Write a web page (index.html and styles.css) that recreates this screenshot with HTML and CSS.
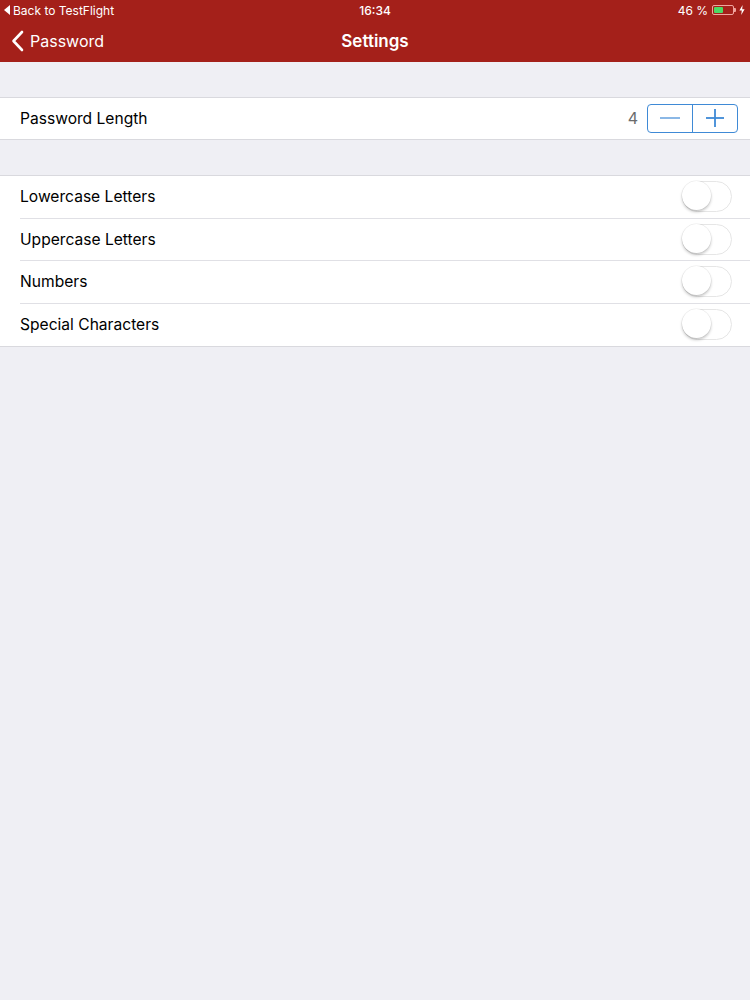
FILE: index.html
```html
<!DOCTYPE html>
<html>
<head>
<meta charset="utf-8">
<link rel="stylesheet" href="styles.css">
</head>
<body>
<div class="app">
  <header class="header">
    <div class="status">
      <div class="status-left"><span class="tri"></span>Back to TestFlight</div>
      <div class="status-center">16:34</div>
      <div class="status-right">
        <span>46 %</span>
        <span class="battery"><span class="battery-fill"></span></span>
        <span class="battery-tip"></span>
        <svg class="bolt" width="6" height="10" viewBox="0 0 6 10"><path d="M3.6 0 L0.4 5.6 H2.8 L2.2 10 L5.6 4.2 H3.2 Z" fill="#fff"/></svg>
      </div>
    </div>
    <div class="nav">
      <div class="nav-back">
        <svg width="13" height="22" viewBox="0 0 13 22"><path d="M11 2 L2.5 11 L11 20" fill="none" stroke="#fff" stroke-width="2.6" stroke-linecap="round" stroke-linejoin="round"/></svg>
        <span>Password</span>
      </div>
      <div class="nav-title">Settings</div>
    </div>
  </header>
  <main class="content">
    <section class="group group-first">
      <div class="row row-last">
        <span class="label">Password Length</span>
        <div class="stepper-wrap">
          <span class="value">4</span>
          <div class="stepper">
            <div class="step"><svg width="20" height="2" viewBox="0 0 20 2"><rect width="20" height="1.2" y="0.4" fill="#3f8ad6"/></svg></div>
            <div class="step step-plus"><svg width="18" height="18" viewBox="0 0 18 18"><rect x="0" y="8.1" width="18" height="1.8" fill="#3f8ad6"/><rect x="8.1" y="0" width="1.8" height="18" fill="#3f8ad6"/></svg></div>
          </div>
        </div>
      </div>
    </section>
    <section class="group">
      <div class="row"><span class="label">Lowercase Letters</span><span class="toggle"><span class="knob"></span></span></div>
      <div class="row"><span class="label">Uppercase Letters</span><span class="toggle"><span class="knob"></span></span></div>
      <div class="row"><span class="label">Numbers</span><span class="toggle"><span class="knob"></span></span></div>
      <div class="row row-last"><span class="label">Special Characters</span><span class="toggle"><span class="knob"></span></span></div>
    </section>
  </main>
</div>
</body>
</html>
```
FILE: styles.css
```css
* { box-sizing: border-box; }
html, body { margin: 0; padding: 0; }
body {
  width: 750px;
  height: 1000px;
  background: #efeff4;
  font-family: Inter, "Noto Sans", sans-serif;
  color: #000;
  overflow: hidden;
}
.header {
  background: #a4201a;
  color: #fff;
  height: 62px;
}
.status {
  height: 20px;
  display: flex;
  align-items: center;
  justify-content: space-between;
  padding: 0 5px 0 4px;
  font-size: 12px;
  position: relative;
}
.status-left { display: flex; align-items: center; gap: 2px; }
.tri {
  width: 0; height: 0;
  border-top: 5px solid transparent;
  border-bottom: 5px solid transparent;
  border-right: 6px solid #fff;
  margin-right: 1px;
}
.status-center {
  position: absolute;
  left: 0; right: 0;
  text-align: center;
  font-weight: 500;
  pointer-events: none;
}
.status-right { display: flex; align-items: center; gap: 0; }
.status-right span:first-child { margin-right: 4px; }
.battery {
  width: 22px; height: 10px;
  border: 1px solid #f0a59f;
  border-radius: 2px;
  padding: 1px;
  display: flex;
}
.battery-fill { width: 9px; height: 100%; background: #4cd964; border-radius: 1px; }
.battery-tip { width: 2px; height: 4px; background: #f0a59f; border-radius: 0 1px 1px 0; margin-right: 3px; }
.nav {
  height: 42px;
  display: flex;
  align-items: center;
  position: relative;
  padding-left: 11px;
}
.nav-back { display: flex; align-items: center; gap: 6px; font-size: 16px; }
.nav-title {
  position: absolute; left: 0; right: 0; text-align: center;
  font-size: 17px; font-weight: 600;
  pointer-events: none;
}
.content { padding-top: 35px; }
.group {
  background: #fff;
  border-top: 1px solid #d9d9de;
  border-bottom: 1px solid #d9d9de;
  margin-bottom: 35px;
}
.row {
  height: 42.5px;
  margin-left: 20px;
  padding-right: 12px;
  display: flex;
  align-items: center;
  justify-content: space-between;
  border-bottom: 1px solid #e0e0e5;
  font-size: 15.6px;
}
.group-first .row { height: 41px; padding-bottom: 1px; }
.row-last { border-bottom: none; }
.stepper-wrap { display: flex; align-items: center; gap: 9px; }
.value { color: #6b6b6b; font-size: 16px; }
.stepper {
  display: flex;
  width: 91px; height: 29px;
  border: 1px solid #3f8ad6;
  border-radius: 4px;
}
.step { flex: 1; display: flex; align-items: center; justify-content: center; }
.step-plus { border-left: 1px solid #3f8ad6; }
.toggle {
  width: 50px; height: 31px;
  border: 1.5px solid #e6e6e6;
  border-radius: 16px;
  position: relative;
  margin-right: 6px;
  background: #fff;
}
.knob {
  position: absolute;
  left: -1px; top: -1px;
  width: 29px; height: 29px;
  border-radius: 50%;
  background: #fff;
  box-shadow: 0 2px 3px rgba(0,0,0,0.22), 0 0 0 0.5px rgba(0,0,0,0.08);
}
```
